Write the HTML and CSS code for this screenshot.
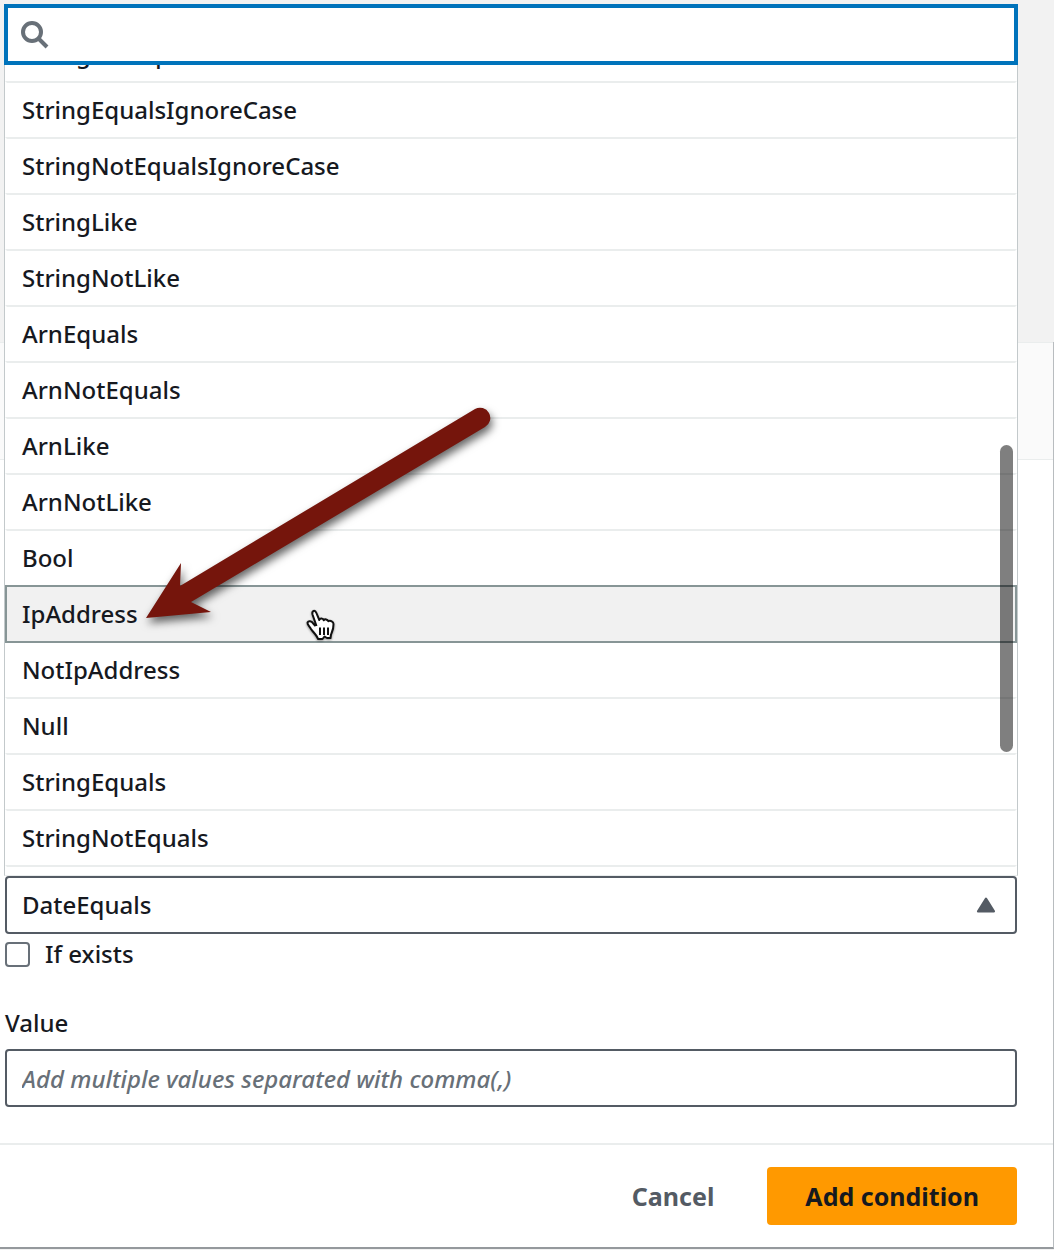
FILE: index.html
```
<!DOCTYPE html>
<html lang="en">
<head>
  <meta charset="utf-8">
  <meta name="viewport" content="width=device-width, initial-scale=1">
  <title>Add condition</title>
  <link rel="stylesheet" href="styles.css">
</head>
<body>
  <main class="modal">
    <div class="modal-header"></div>

    <form class="modal-content">
      <!-- Operator -->
      <div class="select-wrap">
        <select class="field select" aria-label="Operator">
          <option>DateEquals</option>
        </select>
        <svg class="caret" viewBox="0 0 18 15" aria-hidden="true"><path d="M9 1.5 16.5 13.5H1.5Z"/></svg>

        <!-- menu opens above the select -->
        <div class="menu">
          <div class="search">
            <svg class="search-icon" viewBox="0 0 28 28" aria-hidden="true"><circle cx="11" cy="11" r="9"/><path d="M17.500 17.500 26 26"/></svg>
            <input class="search-input" type="text" aria-label="Search operators">
          </div>
          <div class="list-view">
            <ul class="list" role="listbox" aria-label="Operators">
              <li class="option" role="option">StringNotEquals</li>
              <li class="option" role="option">StringEqualsIgnoreCase</li>
              <li class="option" role="option">StringNotEqualsIgnoreCase</li>
              <li class="option" role="option">StringLike</li>
              <li class="option" role="option">StringNotLike</li>
              <li class="option" role="option">ArnEquals</li>
              <li class="option" role="option">ArnNotEquals</li>
              <li class="option" role="option">ArnLike</li>
              <li class="option" role="option">ArnNotLike</li>
              <li class="option" role="option">Bool</li>
              <li class="option active" role="option">IpAddress</li>
              <li class="option" role="option">NotIpAddress</li>
              <li class="option" role="option">Null</li>
              <li class="option" role="option">StringEquals</li>
              <li class="option" role="option">StringNotEquals</li>
              <li class="option" role="option"></li>
            </ul>
            <div class="thumb"></div>
            <svg class="arrow" viewBox="0 0 360 230" aria-hidden="true"><path d="M6 218 41 163 40 186 335 9A10 10 0 0 1 345 27L51 202 71 212Z"/></svg>
            <svg class="pointer" viewBox="0 0 30 32" aria-hidden="true">
              <path d="M10.500 17 6.500 5.500C5.500 1.500 9 .5 10.400 4L13.300 11C14 9 17 9.200 17.800 11.300 18.800 9.700 21.500 10.200 22.300 12.200 24.500 11.200 27.500 12.500 27.500 15 27.700 20 26 23 25 25.500L24.500 29H21L18.500 27.500 16.500 30H12C11 26.500 7 23 5 20 3.500 17 1 15.500 1.500 13.500 2.500 11.500 5.500 12 7.200 14.500L9.500 17"/>
              <path d="M14 18.500V26M18 18.500V26M22 18.500V26"/>
            </svg>
          </div>
        </div>
      </div>

      <label class="check"><input class="checkbox" type="checkbox"> If exists</label>

      <!-- Value -->
      <label class="label" for="value">Value</label>
      <input id="value" class="field" type="text" placeholder="Add multiple values separated with comma(,)">
    </form>

    <div class="modal-footer">
      <button class="btn" type="button">Cancel</button>
      <button class="btn primary" type="button">Add condition</button>
    </div>
  </main>
</body>
</html>
```
FILE: styles.css
```
* { margin: 0; padding: 0; box-sizing: border-box; }

body {
  padding-top: 342px;
  background: #f2f2f2;
  color: #16191f;
  font-family: "Noto Sans", "Open Sans", sans-serif;
  font-size: 24px;
  font-weight: 500;
  line-height: 36px;
}

input, select, button { font: inherit; color: inherit; }

/* modal */
.modal {
  background: #fff;
  border-right: 1px solid #b8bcbf;
  border-bottom: 2px solid #95999d;
}
.modal-header {
  height: 118px;
  background: #fafafa;
  border-top: 1px solid #eaeded;
  border-bottom: 1px solid #eaeded;
}
.modal-content { padding: 416px 36px 36px 5px; }
.modal-footer {
  display: flex;
  justify-content: flex-end;
  gap: 15px;
  padding: 22px 36px 22px 5px;
  border-top: 2px solid #eaeded;
}

/* fields */
.field {
  display: block;
  width: 100%;
  height: 58px;
  padding: 0 15px;
  border: 2px solid #545b64;
  border-radius: 4px;
  background: #fff;
}
.field::placeholder { color: #687078; font-style: italic; opacity: 1; }
.select-wrap { position: relative; }
.select { appearance: none; }
.caret {
  position: absolute;
  top: 21px;
  right: 21px;
  width: 20px;
  height: 16px;
  fill: #545b64;
  stroke: #545b64;
  stroke-width: 2;
  stroke-linejoin: round;
}
.check {
  display: flex;
  align-items: center;
  gap: 15px;
  margin-top: 2px;
}
.checkbox {
  appearance: none;
  width: 25px;
  height: 25px;
  border: 2px solid #687078;
  border-radius: 4px;
  background: #fff;
}
.label { display: block; margin: 33px 0 8px; }

/* dropdown menu */
.menu {
  position: absolute;
  right: -1px;
  bottom: 100%;
  left: -1px;
}
.search {
  display: flex;
  align-items: center;
  height: 61px;
  padding: 0 13px;
  border: 4px solid #0073bb;
  background: #fff;
}
.search-icon {
  width: 28px;
  height: 28px;
  fill: none;
  stroke: #687078;
  stroke-width: 4;
}
.search-input {
  flex: 1;
  padding: 0 10px;
  border: 0;
  outline: 0;
  background: none;
}
.list-view {
  position: relative;
  height: 811px;
  overflow: hidden;
  border: 1px solid #c3c9cb;
  border-top: 0;
  border-bottom-color: #eaeded;
  background: #fff;
}
.list { margin-top: -40px; list-style: none; }
.option {
  height: 58px;
  margin-bottom: -2px;
  padding: 9px 15px;
  border: 2px solid transparent;
  border-top-color: #eaeded;
}
.active {
  position: relative;
  border-color: #879596;
  background: #f1f1f1;
}
.thumb {
  position: absolute;
  top: 380px;
  right: 4px;
  width: 13px;
  height: 307px;
  border-radius: 7px;
  background: rgba(0, 0, 0, 0.5);
}

/* arrow and hand over the list */
.arrow {
  position: absolute;
  top: 335px;
  left: 135px;
  width: 360px;
  height: 230px;
  fill: #75150c;
  filter: drop-shadow(2px 5px 4px rgba(0, 0, 0, 0.6));
}
.pointer {
  position: absolute;
  top: 544px;
  left: 301px;
  width: 30px;
  height: 32px;
  fill: #fff;
  stroke: #111;
  stroke-width: 2;
  stroke-linejoin: round;
  filter: drop-shadow(0 1px 1px rgba(0, 0, 0, 0.4));
}

/* buttons */
.btn {
  height: 58px;
  padding: 0 38px;
  border: 0;
  border-radius: 4px;
  background: none;
  color: #545b64;
  font-size: 25px;
  font-weight: 700;
}
.primary { background: #ff9900; color: #16191f; }
```
